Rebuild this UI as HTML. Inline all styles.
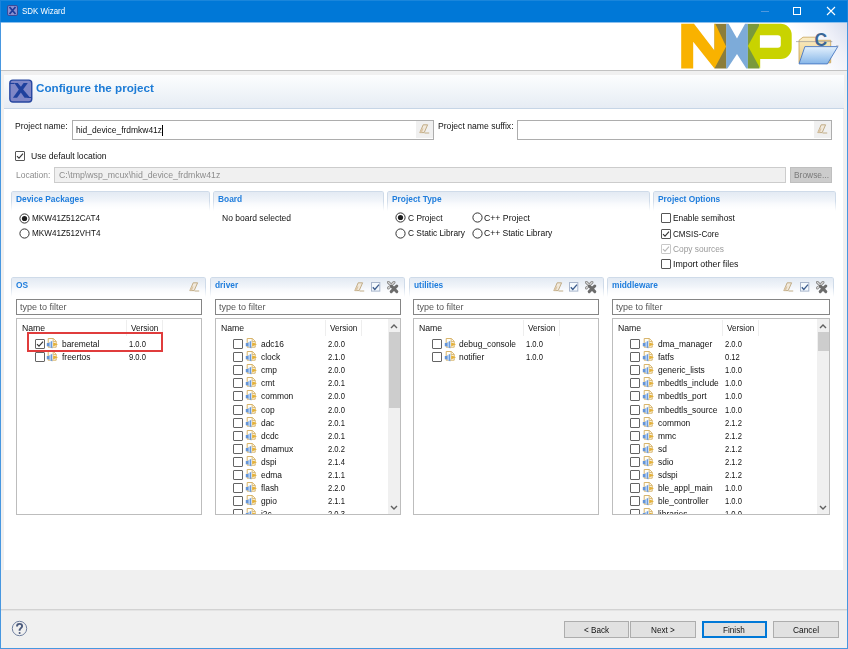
<!DOCTYPE html>
<html><head><meta charset="utf-8"><style>
html,body{margin:0;padding:0;width:848px;height:649px;overflow:hidden;background:#f0f0f0;}
body{position:relative;font-family:"Liberation Sans", sans-serif;}
.t{position:absolute;white-space:nowrap;font-family:"Liberation Sans", sans-serif;}
</style></head><body>
<div style="position:absolute;left:0px;top:0px;width:848px;height:649px;background:#f0f0f0;"></div>
<div style="position:absolute;left:0px;top:0px;width:848px;height:22px;background:#0078d7;"></div>
<div style="position:absolute;left:0px;top:0px;width:848px;height:1px;background:#1a86db;"></div>
<div style="position:absolute;left:0px;top:22px;width:1px;height:627px;background:#4797e0;"></div>
<div style="position:absolute;left:847px;top:22px;width:1px;height:627px;background:#4797e0;"></div>
<div style="position:absolute;left:0px;top:0px;width:1px;height:22px;background:#1a84db;"></div>
<div style="position:absolute;left:847px;top:0px;width:1px;height:22px;background:#1a84db;"></div>
<div style="position:absolute;left:0px;top:648px;width:848px;height:1px;background:#4797e0;"></div>
<div style="position:absolute;left:1px;top:22px;width:846px;height:1px;background:#8cc0ee;"></div>
<svg style="position:absolute;left:7px;top:5px" width="11" height="11" viewBox="0 0 11 11"><rect x="0.5" y="0.5" width="10" height="10" rx="1.5" fill="#8a8fcf" stroke="#3a4a9a" stroke-width="1"/><path d="M2.5 2 L8.5 9 M8.5 2 L2.5 9" stroke="#1d3b9a" stroke-width="1.8"/></svg>
<div class="t" style="left:21.80px;top:6.78px;font-size:9px;line-height:9px;color:#ffffff;font-weight:400;transform:scaleX(0.8787);transform-origin:0 0;">SDK Wizard</div>
<div style="position:absolute;left:761px;top:11px;width:8px;height:1px;background:#4f98de;"></div>
<div style="position:absolute;left:793px;top:7px;width:8px;height:8px;border:1px solid #ffffff;box-sizing:border-box;"></div>
<svg style="position:absolute;left:826px;top:6px" width="10" height="10" viewBox="0 0 10 10"><path d="M1 1 L9 9 M9 1 L1 9" stroke="#ffffff" stroke-width="1.1"/></svg>
<div style="position:absolute;left:1px;top:23px;width:846px;height:47px;background:#ffffff;"></div>
<div style="position:absolute;left:780px;top:23px;width:67px;height:47px;background:linear-gradient(235deg,#d9deee 0%,#eef0f8 25%,#ffffff 60%);"></div>
<div style="position:absolute;left:1px;top:70px;width:846px;height:1px;background:#c2c2c2;"></div>
<svg style="position:absolute;left:676px;top:20px" width="172" height="50" viewBox="676 20 172 50">
<rect x="714.5" y="23.85" width="12" height="44.65" fill="#8c7d3a"/>
<polygon points="681.2,23.85 694,23.85 714.5,50.5 714.5,23.85 715.3,23.85 726.1,46.5 714.5,68.5 693.2,41.65 693.2,68.5 681.2,68.5" fill="#f9b200"/>
<polygon points="726.2,23.85 728.6,23.85 737,38.4 745.1,23.85 747.9,23.85 747.9,68.5 746.3,68.5 737,54.1 727.4,68.5 726.2,68.5" fill="#7dabd9"/>
<rect x="747.9" y="23.85" width="11.6" height="44.65" fill="#7a993c"/>
<polygon points="760.2,23.85 747.9,46.1 760.2,68.5" fill="#c9d300"/>
<path d="M759.5 23.85 L780.5 23.85 A11.2 11.2 0 0 1 791.7 35 L791.7 48 A11 11 0 0 1 780.7 58.9 L759.5 58.9 Z" fill="#c9d300"/>
<path d="M759.9 35.2 L777.8 35.2 A3 3 0 0 1 780.8 38.2 L780.8 44.7 A3 3 0 0 1 777.8 47.7 L759.9 47.7 Z" fill="#ffffff"/>
</svg>
<svg style="position:absolute;left:796px;top:32px" width="50" height="36" viewBox="0 0 50 36">
<defs><linearGradient id="fb" x1="0" y1="0" x2="0" y2="1"><stop offset="0" stop-color="#fbeec8"/><stop offset="1" stop-color="#e9c879"/></linearGradient>
<linearGradient id="ff" x1="0" y1="0" x2="0" y2="1"><stop offset="0" stop-color="#e4f1fd"/><stop offset="1" stop-color="#86b6e8"/></linearGradient></defs>
<path d="M3 8.3 L7 5.2 L19.5 5.2 L21 8.3 L34.7 8.3 L34.7 30.8 L3 30.8 Z" fill="url(#fb)" stroke="#c7a257" stroke-width="0.8"/>
<path d="M0 9.6 L36.3 9.6" stroke="#9a9a9a" stroke-width="0.7"/>
<text x="18.6" y="14.4" font-family="Liberation Sans" font-weight="700" font-size="17.5" fill="#3a6796">C</text>
<path d="M8.9 14.6 L41.8 14.6 L31.4 31.9 L3 31.9 Z" fill="url(#ff)" stroke="#4877c2" stroke-width="0.9"/>
<path d="M40 13.8 L42.5 13.8" stroke="#9a9a9a" stroke-width="0.6"/>
</svg>
<div style="position:absolute;left:4px;top:75px;width:840px;height:33px;background:linear-gradient(180deg,#fcfdfe 0%,#f1f5f9 50%,#e6ecf4 100%);"></div>
<div style="position:absolute;left:4px;top:108px;width:840px;height:1px;background:#c6d5e6;"></div>
<svg style="position:absolute;left:9px;top:79px" width="24" height="24" viewBox="0 0 24 24"><rect x="0.85" y="1.15" width="21.9" height="21.9" rx="3" fill="#7f86c6" stroke="#2646a0" stroke-width="1.4"/><polygon points="5.3,3.9 8.8,3.9 21.1,18.8 15.5,18.8" fill="#1f409d"/><polygon points="14.6,3.9 18.8,3.9 8.1,18.8 3.9,18.8" fill="#1f409d"/><rect x="0.9" y="3.9" width="4.6" height="1.1" fill="#1f409d"/><rect x="18.5" y="18" width="4" height="1" fill="#1f409d"/></svg>
<div class="t" style="left:35.80px;top:82.38px;font-size:11.6px;line-height:11.6px;color:#1c7bd6;font-weight:700;transform:scaleX(1.0062);transform-origin:0 0;">Configure the project</div>
<div style="position:absolute;left:4px;top:109px;width:839px;height:461px;background:#ffffff;"></div>
<div class="t" style="left:15.40px;top:121.06px;font-size:9.5px;line-height:9.5px;color:#111111;font-weight:400;transform:scaleX(0.8974);transform-origin:0 0;">Project name:</div>
<div style="position:absolute;left:72px;top:120px;width:362px;height:20px;box-sizing:border-box;border:1px solid #adadad;background:#ffffff;"></div>
<div class="t" style="left:75.60px;top:125.06px;font-size:9.5px;line-height:9.5px;color:#111111;font-weight:400;transform:scaleX(0.8901);transform-origin:0 0;">hid_device_frdmkw41z</div>
<div style="position:absolute;left:162px;top:125px;width:1px;height:11px;background:#000;"></div>
<div style="position:absolute;left:416px;top:121px;width:17px;height:17px;background:#f0f0f0;"></div>
<svg style="position:absolute;left:419px;top:124px" width="11" height="10" viewBox="0 0 11 10"><path d="M4.2 0.8 L8.6 0.8 L5.2 8.6 L0.8 8.6 Z" fill="#f1e9dc" stroke="#bba57c" stroke-width="0.9"/><path d="M0.8 8.6 L2.6 4.6 L4.6 4.6 L2.9 8.6 Z" fill="#dcc6a6"/><path d="M5.6 9 L10.2 9" stroke="#bba57c" stroke-width="0.9"/></svg>
<div class="t" style="left:437.50px;top:121.06px;font-size:9.5px;line-height:9.5px;color:#111111;font-weight:400;transform:scaleX(0.9072);transform-origin:0 0;">Project name suffix:</div>
<div style="position:absolute;left:517px;top:120px;width:315px;height:20px;box-sizing:border-box;border:1px solid #adadad;background:#ffffff;"></div>
<div style="position:absolute;left:814px;top:121px;width:17px;height:17px;background:#f0f0f0;"></div>
<svg style="position:absolute;left:817px;top:124px" width="11" height="10" viewBox="0 0 11 10"><path d="M4.2 0.8 L8.6 0.8 L5.2 8.6 L0.8 8.6 Z" fill="#f1e9dc" stroke="#bba57c" stroke-width="0.9"/><path d="M0.8 8.6 L2.6 4.6 L4.6 4.6 L2.9 8.6 Z" fill="#dcc6a6"/><path d="M5.6 9 L10.2 9" stroke="#bba57c" stroke-width="0.9"/></svg>
<div style="position:absolute;left:15px;top:151px;width:10px;height:10px;box-sizing:border-box;border:1px solid #555555;background:#fff;border-radius:1px"></div>
<svg style="position:absolute;left:15px;top:151px" width="10" height="10" viewBox="0 0 10 10"><path d="M2 5.2 L4 7.2 L8 2.6" fill="none" stroke="#333333" stroke-width="1.1"/></svg>
<div class="t" style="left:30.90px;top:151.16px;font-size:9.5px;line-height:9.5px;color:#111111;font-weight:400;transform:scaleX(0.9064);transform-origin:0 0;">Use default location</div>
<div class="t" style="left:15.90px;top:170.26px;font-size:9.5px;line-height:9.5px;color:#8d8d8d;font-weight:400;transform:scaleX(0.8919);transform-origin:0 0;">Location:</div>
<div style="position:absolute;left:54px;top:167px;width:732px;height:16px;box-sizing:border-box;border:1px solid #cccccc;background:#f0f0f0;"></div>
<div class="t" style="left:58.80px;top:170.26px;font-size:9.5px;line-height:9.5px;color:#8d8d8d;font-weight:400;transform:scaleX(0.9228);transform-origin:0 0;">C:\tmp\wsp_mcux\hid_device_frdmkw41z</div>
<div style="position:absolute;left:790px;top:167px;width:42px;height:16px;background:#cccccc;box-sizing:border-box;border:1px solid #bfbfbf;"></div>
<div class="t" style="left:793.50px;top:169.76px;font-size:9.5px;line-height:9.5px;color:#7a7a7a;font-weight:400;transform:scaleX(0.8850);transform-origin:0 0;">Browse...</div>
<div style="position:absolute;left:11px;top:191px;width:199px;height:20px;box-sizing:border-box;border:1px solid #cfdbe9;border-bottom:none;border-radius:2px 2px 0 0;background:linear-gradient(180deg,#e3eaf3 0%,#f4f7fb 55%,#ffffff 100%);-webkit-mask-image:linear-gradient(180deg,#000 0%,#000 50%,rgba(0,0,0,0) 100%);"></div>
<div class="t" style="left:16.00px;top:193.76px;font-size:9.5px;line-height:9.5px;color:#1f7ddc;font-weight:700;transform:scaleX(0.8800);transform-origin:0 0;">Device Packages</div>
<div style="position:absolute;left:213px;top:191px;width:171px;height:20px;box-sizing:border-box;border:1px solid #cfdbe9;border-bottom:none;border-radius:2px 2px 0 0;background:linear-gradient(180deg,#e3eaf3 0%,#f4f7fb 55%,#ffffff 100%);-webkit-mask-image:linear-gradient(180deg,#000 0%,#000 50%,rgba(0,0,0,0) 100%);"></div>
<div class="t" style="left:218.00px;top:193.76px;font-size:9.5px;line-height:9.5px;color:#1f7ddc;font-weight:700;transform:scaleX(0.8800);transform-origin:0 0;">Board</div>
<div style="position:absolute;left:387px;top:191px;width:263px;height:20px;box-sizing:border-box;border:1px solid #cfdbe9;border-bottom:none;border-radius:2px 2px 0 0;background:linear-gradient(180deg,#e3eaf3 0%,#f4f7fb 55%,#ffffff 100%);-webkit-mask-image:linear-gradient(180deg,#000 0%,#000 50%,rgba(0,0,0,0) 100%);"></div>
<div class="t" style="left:392.00px;top:193.76px;font-size:9.5px;line-height:9.5px;color:#1f7ddc;font-weight:700;transform:scaleX(0.8800);transform-origin:0 0;">Project Type</div>
<div style="position:absolute;left:653px;top:191px;width:183px;height:20px;box-sizing:border-box;border:1px solid #cfdbe9;border-bottom:none;border-radius:2px 2px 0 0;background:linear-gradient(180deg,#e3eaf3 0%,#f4f7fb 55%,#ffffff 100%);-webkit-mask-image:linear-gradient(180deg,#000 0%,#000 50%,rgba(0,0,0,0) 100%);"></div>
<div class="t" style="left:658.00px;top:193.76px;font-size:9.5px;line-height:9.5px;color:#1f7ddc;font-weight:700;transform:scaleX(0.8800);transform-origin:0 0;">Project Options</div>
<svg style="position:absolute;left:18.5px;top:212.5px" width="11" height="11" viewBox="0 0 11 11"><circle cx="5.5" cy="5.5" r="4.6" fill="#fff" stroke="#333" stroke-width="1"/><circle cx="5.5" cy="5.5" r="2.6" fill="#1e1e1e"/></svg>
<div class="t" style="left:31.50px;top:212.76px;font-size:9.5px;line-height:9.5px;color:#111111;font-weight:400;transform:scaleX(0.8603);transform-origin:0 0;">MKW41Z512CAT4</div>
<svg style="position:absolute;left:18.5px;top:227.5px" width="11" height="11" viewBox="0 0 11 11"><circle cx="5.5" cy="5.5" r="4.6" fill="#fff" stroke="#333" stroke-width="1"/></svg>
<div class="t" style="left:31.50px;top:228.06px;font-size:9.5px;line-height:9.5px;color:#111111;font-weight:400;transform:scaleX(0.8582);transform-origin:0 0;">MKW41Z512VHT4</div>
<div class="t" style="left:221.50px;top:212.76px;font-size:9.5px;line-height:9.5px;color:#111111;font-weight:400;transform:scaleX(0.8958);transform-origin:0 0;">No board selected</div>
<svg style="position:absolute;left:394.5px;top:212.3px" width="11" height="11" viewBox="0 0 11 11"><circle cx="5.5" cy="5.5" r="4.6" fill="#fff" stroke="#333" stroke-width="1"/><circle cx="5.5" cy="5.5" r="2.6" fill="#1e1e1e"/></svg>
<div class="t" style="left:407.60px;top:212.96px;font-size:9.5px;line-height:9.5px;color:#111111;font-weight:400;transform:scaleX(0.8836);transform-origin:0 0;">C Project</div>
<svg style="position:absolute;left:471.5px;top:212.3px" width="11" height="11" viewBox="0 0 11 11"><circle cx="5.5" cy="5.5" r="4.6" fill="#fff" stroke="#333" stroke-width="1"/></svg>
<div class="t" style="left:483.80px;top:212.96px;font-size:9.5px;line-height:9.5px;color:#111111;font-weight:400;transform:scaleX(0.9151);transform-origin:0 0;">C++ Project</div>
<svg style="position:absolute;left:394.5px;top:227.9px" width="11" height="11" viewBox="0 0 11 11"><circle cx="5.5" cy="5.5" r="4.6" fill="#fff" stroke="#333" stroke-width="1"/></svg>
<div class="t" style="left:407.60px;top:228.46px;font-size:9.5px;line-height:9.5px;color:#111111;font-weight:400;transform:scaleX(0.8772);transform-origin:0 0;">C Static Library</div>
<svg style="position:absolute;left:471.5px;top:227.9px" width="11" height="11" viewBox="0 0 11 11"><circle cx="5.5" cy="5.5" r="4.6" fill="#fff" stroke="#333" stroke-width="1"/></svg>
<div class="t" style="left:483.80px;top:228.46px;font-size:9.5px;line-height:9.5px;color:#111111;font-weight:400;transform:scaleX(0.8974);transform-origin:0 0;">C++ Static Library</div>
<div style="position:absolute;left:661px;top:213px;width:10px;height:10px;box-sizing:border-box;border:1px solid #555555;background:#fff;border-radius:1px"></div>
<div class="t" style="left:673.00px;top:213.26px;font-size:9.5px;line-height:9.5px;color:#111111;font-weight:400;transform:scaleX(0.8796);transform-origin:0 0;">Enable semihost</div>
<div style="position:absolute;left:661px;top:229px;width:10px;height:10px;box-sizing:border-box;border:1px solid #555555;background:#fff;border-radius:1px"></div>
<svg style="position:absolute;left:661px;top:229px" width="10" height="10" viewBox="0 0 10 10"><path d="M2 5.2 L4 7.2 L8 2.6" fill="none" stroke="#333333" stroke-width="1.1"/></svg>
<div class="t" style="left:673.00px;top:228.56px;font-size:9.5px;line-height:9.5px;color:#111111;font-weight:400;transform:scaleX(0.8540);transform-origin:0 0;">CMSIS-Core</div>
<div style="position:absolute;left:661px;top:244px;width:10px;height:10px;box-sizing:border-box;border:1px solid #c8c8c8;background:#fff;border-radius:1px"></div>
<svg style="position:absolute;left:661px;top:244px" width="10" height="10" viewBox="0 0 10 10"><path d="M2 5.2 L4 7.2 L8 2.6" fill="none" stroke="#b8b8b8" stroke-width="1.1"/></svg>
<div class="t" style="left:673.00px;top:243.86px;font-size:9.5px;line-height:9.5px;color:#9a9a9a;font-weight:400;transform:scaleX(0.8786);transform-origin:0 0;">Copy sources</div>
<div style="position:absolute;left:661px;top:259px;width:10px;height:10px;box-sizing:border-box;border:1px solid #555555;background:#fff;border-radius:1px"></div>
<div class="t" style="left:673.00px;top:259.16px;font-size:9.5px;line-height:9.5px;color:#111111;font-weight:400;transform:scaleX(0.9255);transform-origin:0 0;">Import other files</div>
<div style="position:absolute;left:11px;top:277px;width:195px;height:20px;box-sizing:border-box;border:1px solid #cfdbe9;border-bottom:none;border-radius:2px 2px 0 0;background:linear-gradient(180deg,#e3eaf3 0%,#f4f7fb 55%,#ffffff 100%);-webkit-mask-image:linear-gradient(180deg,#000 0%,#000 50%,rgba(0,0,0,0) 100%);"></div>
<div class="t" style="left:16.00px;top:279.86px;font-size:9.5px;line-height:9.5px;color:#1f7ddc;font-weight:700;transform:scaleX(0.8800);transform-origin:0 0;">OS</div>
<svg style="position:absolute;left:189px;top:282px" width="11" height="10" viewBox="0 0 11 10"><path d="M4.2 0.8 L8.6 0.8 L5.2 8.6 L0.8 8.6 Z" fill="#f1e9dc" stroke="#bba57c" stroke-width="0.9"/><path d="M0.8 8.6 L2.6 4.6 L4.6 4.6 L2.9 8.6 Z" fill="#dcc6a6"/><path d="M5.6 9 L10.2 9" stroke="#bba57c" stroke-width="0.9"/></svg>
<div style="position:absolute;left:16px;top:299px;width:186px;height:16px;box-sizing:border-box;border:1px solid #858585;background:#fff;"></div>
<div class="t" style="left:20.00px;top:301.96px;font-size:9.5px;line-height:9.5px;color:#555555;font-weight:400;transform:scaleX(0.9488);transform-origin:0 0;">type to filter</div>
<div style="position:absolute;left:16px;top:318px;width:186px;height:197px;box-sizing:border-box;border:1px solid #bdbdbd;background:#fff;overflow:hidden;"></div>
<div style="position:absolute;left:126px;top:320px;width:1px;height:16px;background:#eeeeee;"></div>
<div style="position:absolute;left:162px;top:320px;width:1px;height:16px;background:#eeeeee;"></div>
<div class="t" style="left:22.00px;top:323.46px;font-size:9.5px;line-height:9.5px;color:#111111;font-weight:400;transform:scaleX(0.9146);transform-origin:0 0;">Name</div>
<div class="t" style="left:131.00px;top:323.46px;font-size:9.5px;line-height:9.5px;color:#111111;font-weight:400;transform:scaleX(0.8604);transform-origin:0 0;">Version</div>
<div style="position:absolute;left:17px;top:319px;width:184px;height:195px;overflow:hidden">
<div style="position:absolute;left:17.5px;top:20.100000000000023px;width:10px;height:10px;box-sizing:border-box;border:1px solid #646464;background:#fff;border-radius:1px"></div>
<svg style="position:absolute;left:17.5px;top:20.100000000000023px" width="10" height="10" viewBox="0 0 10 10"><path d="M2 5.2 L4 7.2 L8 2.6" fill="none" stroke="#333" stroke-width="1.1"/></svg>
<svg style="position:absolute;left:29.4px;top:19.10px" width="13" height="12" viewBox="0 0 13 12">
<path d="M2.2 0.5 L7.4 0.5 L10.2 3.3 L10.2 9.2 L2.2 9.2 Z" fill="#fffdf5" stroke="#d4ad5c" stroke-width="0.9"/>
<path d="M7.2 0.6 L7.2 3.5 L10.1 3.5" fill="none" stroke="#d4ad5c" stroke-width="0.8"/>
<path d="M0.8 5 L2.8 5 L6.3 2.8 L6.3 10.5 L2.8 8.3 L0.8 8.3 Z" fill="#6494d6"/>
<path d="M3.4 4.3 L5.1 3.5 L5.1 9.7 L3.4 8.9 Z" fill="#b3cff2"/>
<path d="M7.1 4.2 L12 6.3 L7.1 8.4 Z" fill="#e4b13a"/>
</svg>
<div class="t" style="left:45.00px;top:20.16px;font-size:9.5px;line-height:9.5px;color:#111111;transform:scaleX(0.885);transform-origin:0 0">baremetal</div>
<div class="t" style="left:112.00px;top:20.16px;font-size:9.5px;line-height:9.5px;color:#111111;transform:scaleX(0.8);transform-origin:0 0">1.0.0</div>
<div style="position:absolute;left:17.5px;top:33.18000000000001px;width:10px;height:10px;box-sizing:border-box;border:1px solid #646464;background:#fff;border-radius:1px"></div>
<svg style="position:absolute;left:29.4px;top:32.18px" width="13" height="12" viewBox="0 0 13 12">
<path d="M2.2 0.5 L7.4 0.5 L10.2 3.3 L10.2 9.2 L2.2 9.2 Z" fill="#fffdf5" stroke="#d4ad5c" stroke-width="0.9"/>
<path d="M7.2 0.6 L7.2 3.5 L10.1 3.5" fill="none" stroke="#d4ad5c" stroke-width="0.8"/>
<path d="M0.8 5 L2.8 5 L6.3 2.8 L6.3 10.5 L2.8 8.3 L0.8 8.3 Z" fill="#6494d6"/>
<path d="M3.4 4.3 L5.1 3.5 L5.1 9.7 L3.4 8.9 Z" fill="#b3cff2"/>
<path d="M7.1 4.2 L12 6.3 L7.1 8.4 Z" fill="#e4b13a"/>
</svg>
<div class="t" style="left:45.00px;top:33.24px;font-size:9.5px;line-height:9.5px;color:#111111;transform:scaleX(0.885);transform-origin:0 0">freertos</div>
<div class="t" style="left:112.00px;top:33.24px;font-size:9.5px;line-height:9.5px;color:#111111;transform:scaleX(0.8);transform-origin:0 0">9.0.0</div>
</div>
<div style="position:absolute;left:27px;top:332px;width:136px;height:20px;box-sizing:border-box;border:2px solid #e03c3c;"></div>
<div style="position:absolute;left:210px;top:277px;width:195px;height:20px;box-sizing:border-box;border:1px solid #cfdbe9;border-bottom:none;border-radius:2px 2px 0 0;background:linear-gradient(180deg,#e3eaf3 0%,#f4f7fb 55%,#ffffff 100%);-webkit-mask-image:linear-gradient(180deg,#000 0%,#000 50%,rgba(0,0,0,0) 100%);"></div>
<div class="t" style="left:215.00px;top:279.86px;font-size:9.5px;line-height:9.5px;color:#1f7ddc;font-weight:700;transform:scaleX(0.8800);transform-origin:0 0;">driver</div>
<svg style="position:absolute;left:354px;top:282px" width="11" height="10" viewBox="0 0 11 10"><path d="M4.2 0.8 L8.6 0.8 L5.2 8.6 L0.8 8.6 Z" fill="#f1e9dc" stroke="#bba57c" stroke-width="0.9"/><path d="M0.8 8.6 L2.6 4.6 L4.6 4.6 L2.9 8.6 Z" fill="#dcc6a6"/><path d="M5.6 9 L10.2 9" stroke="#bba57c" stroke-width="0.9"/></svg>
<svg style="position:absolute;left:371px;top:282px" width="10" height="10" viewBox="0 0 10 10"><rect x="0.5" y="0.5" width="8.3" height="8.6" fill="#f4f9fd" stroke="#a9b6cc" stroke-width="1"/><path d="M1.8 5.2 L3.8 7.4 L8 2.6" fill="none" stroke="#3b5b8c" stroke-width="1.3"/></svg>
<svg style="position:absolute;left:387px;top:281px" width="13" height="13" viewBox="0 0 13 13"><path d="M1.4 1.4 L7 7 M7 1.4 L1.4 7" stroke="#8c8c8c" stroke-width="2.9" stroke-linecap="round"/><path d="M1.4 1.4 L7 7 M7 1.4 L1.4 7" stroke="#dcdcdc" stroke-width="1.1" stroke-linecap="round"/><path d="M4.2 5 L9.8 10.6 M9.8 5 L4.2 10.6" stroke="#6c6c6c" stroke-width="3" stroke-linecap="round"/></svg>
<div style="position:absolute;left:214.5px;top:299px;width:186.5px;height:16px;box-sizing:border-box;border:1px solid #858585;background:#fff;"></div>
<div class="t" style="left:218.50px;top:301.96px;font-size:9.5px;line-height:9.5px;color:#555555;font-weight:400;transform:scaleX(0.9488);transform-origin:0 0;">type to filter</div>
<div style="position:absolute;left:214.5px;top:318px;width:186.5px;height:197px;box-sizing:border-box;border:1px solid #bdbdbd;background:#fff;overflow:hidden;"></div>
<div style="position:absolute;left:324.5px;top:320px;width:1px;height:16px;background:#eeeeee;"></div>
<div style="position:absolute;left:360.5px;top:320px;width:1px;height:16px;background:#eeeeee;"></div>
<div class="t" style="left:220.50px;top:323.46px;font-size:9.5px;line-height:9.5px;color:#111111;font-weight:400;transform:scaleX(0.9146);transform-origin:0 0;">Name</div>
<div class="t" style="left:329.50px;top:323.46px;font-size:9.5px;line-height:9.5px;color:#111111;font-weight:400;transform:scaleX(0.8604);transform-origin:0 0;">Version</div>
<div style="position:absolute;left:215.5px;top:319px;width:184.5px;height:195px;overflow:hidden">
<div style="position:absolute;left:17.5px;top:20.100000000000023px;width:10px;height:10px;box-sizing:border-box;border:1px solid #646464;background:#fff;border-radius:1px"></div>
<svg style="position:absolute;left:29.4px;top:19.10px" width="13" height="12" viewBox="0 0 13 12">
<path d="M2.2 0.5 L7.4 0.5 L10.2 3.3 L10.2 9.2 L2.2 9.2 Z" fill="#fffdf5" stroke="#d4ad5c" stroke-width="0.9"/>
<path d="M7.2 0.6 L7.2 3.5 L10.1 3.5" fill="none" stroke="#d4ad5c" stroke-width="0.8"/>
<path d="M0.8 5 L2.8 5 L6.3 2.8 L6.3 10.5 L2.8 8.3 L0.8 8.3 Z" fill="#6494d6"/>
<path d="M3.4 4.3 L5.1 3.5 L5.1 9.7 L3.4 8.9 Z" fill="#b3cff2"/>
<path d="M7.1 4.2 L12 6.3 L7.1 8.4 Z" fill="#e4b13a"/>
</svg>
<div class="t" style="left:45.00px;top:20.16px;font-size:9.5px;line-height:9.5px;color:#111111;transform:scaleX(0.885);transform-origin:0 0">adc16</div>
<div class="t" style="left:112.00px;top:20.16px;font-size:9.5px;line-height:9.5px;color:#111111;transform:scaleX(0.8);transform-origin:0 0">2.0.0</div>
<div style="position:absolute;left:17.5px;top:33.18000000000001px;width:10px;height:10px;box-sizing:border-box;border:1px solid #646464;background:#fff;border-radius:1px"></div>
<svg style="position:absolute;left:29.4px;top:32.18px" width="13" height="12" viewBox="0 0 13 12">
<path d="M2.2 0.5 L7.4 0.5 L10.2 3.3 L10.2 9.2 L2.2 9.2 Z" fill="#fffdf5" stroke="#d4ad5c" stroke-width="0.9"/>
<path d="M7.2 0.6 L7.2 3.5 L10.1 3.5" fill="none" stroke="#d4ad5c" stroke-width="0.8"/>
<path d="M0.8 5 L2.8 5 L6.3 2.8 L6.3 10.5 L2.8 8.3 L0.8 8.3 Z" fill="#6494d6"/>
<path d="M3.4 4.3 L5.1 3.5 L5.1 9.7 L3.4 8.9 Z" fill="#b3cff2"/>
<path d="M7.1 4.2 L12 6.3 L7.1 8.4 Z" fill="#e4b13a"/>
</svg>
<div class="t" style="left:45.00px;top:33.24px;font-size:9.5px;line-height:9.5px;color:#111111;transform:scaleX(0.885);transform-origin:0 0">clock</div>
<div class="t" style="left:112.00px;top:33.24px;font-size:9.5px;line-height:9.5px;color:#111111;transform:scaleX(0.8);transform-origin:0 0">2.1.0</div>
<div style="position:absolute;left:17.5px;top:46.26000000000005px;width:10px;height:10px;box-sizing:border-box;border:1px solid #646464;background:#fff;border-radius:1px"></div>
<svg style="position:absolute;left:29.4px;top:45.26px" width="13" height="12" viewBox="0 0 13 12">
<path d="M2.2 0.5 L7.4 0.5 L10.2 3.3 L10.2 9.2 L2.2 9.2 Z" fill="#fffdf5" stroke="#d4ad5c" stroke-width="0.9"/>
<path d="M7.2 0.6 L7.2 3.5 L10.1 3.5" fill="none" stroke="#d4ad5c" stroke-width="0.8"/>
<path d="M0.8 5 L2.8 5 L6.3 2.8 L6.3 10.5 L2.8 8.3 L0.8 8.3 Z" fill="#6494d6"/>
<path d="M3.4 4.3 L5.1 3.5 L5.1 9.7 L3.4 8.9 Z" fill="#b3cff2"/>
<path d="M7.1 4.2 L12 6.3 L7.1 8.4 Z" fill="#e4b13a"/>
</svg>
<div class="t" style="left:45.00px;top:46.32px;font-size:9.5px;line-height:9.5px;color:#111111;transform:scaleX(0.885);transform-origin:0 0">cmp</div>
<div class="t" style="left:112.00px;top:46.32px;font-size:9.5px;line-height:9.5px;color:#111111;transform:scaleX(0.8);transform-origin:0 0">2.0.0</div>
<div style="position:absolute;left:17.5px;top:59.34000000000003px;width:10px;height:10px;box-sizing:border-box;border:1px solid #646464;background:#fff;border-radius:1px"></div>
<svg style="position:absolute;left:29.4px;top:58.34px" width="13" height="12" viewBox="0 0 13 12">
<path d="M2.2 0.5 L7.4 0.5 L10.2 3.3 L10.2 9.2 L2.2 9.2 Z" fill="#fffdf5" stroke="#d4ad5c" stroke-width="0.9"/>
<path d="M7.2 0.6 L7.2 3.5 L10.1 3.5" fill="none" stroke="#d4ad5c" stroke-width="0.8"/>
<path d="M0.8 5 L2.8 5 L6.3 2.8 L6.3 10.5 L2.8 8.3 L0.8 8.3 Z" fill="#6494d6"/>
<path d="M3.4 4.3 L5.1 3.5 L5.1 9.7 L3.4 8.9 Z" fill="#b3cff2"/>
<path d="M7.1 4.2 L12 6.3 L7.1 8.4 Z" fill="#e4b13a"/>
</svg>
<div class="t" style="left:45.00px;top:59.40px;font-size:9.5px;line-height:9.5px;color:#111111;transform:scaleX(0.885);transform-origin:0 0">cmt</div>
<div class="t" style="left:112.00px;top:59.40px;font-size:9.5px;line-height:9.5px;color:#111111;transform:scaleX(0.8);transform-origin:0 0">2.0.1</div>
<div style="position:absolute;left:17.5px;top:72.42000000000002px;width:10px;height:10px;box-sizing:border-box;border:1px solid #646464;background:#fff;border-radius:1px"></div>
<svg style="position:absolute;left:29.4px;top:71.42px" width="13" height="12" viewBox="0 0 13 12">
<path d="M2.2 0.5 L7.4 0.5 L10.2 3.3 L10.2 9.2 L2.2 9.2 Z" fill="#fffdf5" stroke="#d4ad5c" stroke-width="0.9"/>
<path d="M7.2 0.6 L7.2 3.5 L10.1 3.5" fill="none" stroke="#d4ad5c" stroke-width="0.8"/>
<path d="M0.8 5 L2.8 5 L6.3 2.8 L6.3 10.5 L2.8 8.3 L0.8 8.3 Z" fill="#6494d6"/>
<path d="M3.4 4.3 L5.1 3.5 L5.1 9.7 L3.4 8.9 Z" fill="#b3cff2"/>
<path d="M7.1 4.2 L12 6.3 L7.1 8.4 Z" fill="#e4b13a"/>
</svg>
<div class="t" style="left:45.00px;top:72.48px;font-size:9.5px;line-height:9.5px;color:#111111;transform:scaleX(0.885);transform-origin:0 0">common</div>
<div class="t" style="left:112.00px;top:72.48px;font-size:9.5px;line-height:9.5px;color:#111111;transform:scaleX(0.8);transform-origin:0 0">2.0.0</div>
<div style="position:absolute;left:17.5px;top:85.5px;width:10px;height:10px;box-sizing:border-box;border:1px solid #646464;background:#fff;border-radius:1px"></div>
<svg style="position:absolute;left:29.4px;top:84.50px" width="13" height="12" viewBox="0 0 13 12">
<path d="M2.2 0.5 L7.4 0.5 L10.2 3.3 L10.2 9.2 L2.2 9.2 Z" fill="#fffdf5" stroke="#d4ad5c" stroke-width="0.9"/>
<path d="M7.2 0.6 L7.2 3.5 L10.1 3.5" fill="none" stroke="#d4ad5c" stroke-width="0.8"/>
<path d="M0.8 5 L2.8 5 L6.3 2.8 L6.3 10.5 L2.8 8.3 L0.8 8.3 Z" fill="#6494d6"/>
<path d="M3.4 4.3 L5.1 3.5 L5.1 9.7 L3.4 8.9 Z" fill="#b3cff2"/>
<path d="M7.1 4.2 L12 6.3 L7.1 8.4 Z" fill="#e4b13a"/>
</svg>
<div class="t" style="left:45.00px;top:85.56px;font-size:9.5px;line-height:9.5px;color:#111111;transform:scaleX(0.885);transform-origin:0 0">cop</div>
<div class="t" style="left:112.00px;top:85.56px;font-size:9.5px;line-height:9.5px;color:#111111;transform:scaleX(0.8);transform-origin:0 0">2.0.0</div>
<div style="position:absolute;left:17.5px;top:98.58000000000004px;width:10px;height:10px;box-sizing:border-box;border:1px solid #646464;background:#fff;border-radius:1px"></div>
<svg style="position:absolute;left:29.4px;top:97.58px" width="13" height="12" viewBox="0 0 13 12">
<path d="M2.2 0.5 L7.4 0.5 L10.2 3.3 L10.2 9.2 L2.2 9.2 Z" fill="#fffdf5" stroke="#d4ad5c" stroke-width="0.9"/>
<path d="M7.2 0.6 L7.2 3.5 L10.1 3.5" fill="none" stroke="#d4ad5c" stroke-width="0.8"/>
<path d="M0.8 5 L2.8 5 L6.3 2.8 L6.3 10.5 L2.8 8.3 L0.8 8.3 Z" fill="#6494d6"/>
<path d="M3.4 4.3 L5.1 3.5 L5.1 9.7 L3.4 8.9 Z" fill="#b3cff2"/>
<path d="M7.1 4.2 L12 6.3 L7.1 8.4 Z" fill="#e4b13a"/>
</svg>
<div class="t" style="left:45.00px;top:98.64px;font-size:9.5px;line-height:9.5px;color:#111111;transform:scaleX(0.885);transform-origin:0 0">dac</div>
<div class="t" style="left:112.00px;top:98.64px;font-size:9.5px;line-height:9.5px;color:#111111;transform:scaleX(0.8);transform-origin:0 0">2.0.1</div>
<div style="position:absolute;left:17.5px;top:111.66000000000003px;width:10px;height:10px;box-sizing:border-box;border:1px solid #646464;background:#fff;border-radius:1px"></div>
<svg style="position:absolute;left:29.4px;top:110.66px" width="13" height="12" viewBox="0 0 13 12">
<path d="M2.2 0.5 L7.4 0.5 L10.2 3.3 L10.2 9.2 L2.2 9.2 Z" fill="#fffdf5" stroke="#d4ad5c" stroke-width="0.9"/>
<path d="M7.2 0.6 L7.2 3.5 L10.1 3.5" fill="none" stroke="#d4ad5c" stroke-width="0.8"/>
<path d="M0.8 5 L2.8 5 L6.3 2.8 L6.3 10.5 L2.8 8.3 L0.8 8.3 Z" fill="#6494d6"/>
<path d="M3.4 4.3 L5.1 3.5 L5.1 9.7 L3.4 8.9 Z" fill="#b3cff2"/>
<path d="M7.1 4.2 L12 6.3 L7.1 8.4 Z" fill="#e4b13a"/>
</svg>
<div class="t" style="left:45.00px;top:111.72px;font-size:9.5px;line-height:9.5px;color:#111111;transform:scaleX(0.885);transform-origin:0 0">dcdc</div>
<div class="t" style="left:112.00px;top:111.72px;font-size:9.5px;line-height:9.5px;color:#111111;transform:scaleX(0.8);transform-origin:0 0">2.0.1</div>
<div style="position:absolute;left:17.5px;top:124.74000000000001px;width:10px;height:10px;box-sizing:border-box;border:1px solid #646464;background:#fff;border-radius:1px"></div>
<svg style="position:absolute;left:29.4px;top:123.74px" width="13" height="12" viewBox="0 0 13 12">
<path d="M2.2 0.5 L7.4 0.5 L10.2 3.3 L10.2 9.2 L2.2 9.2 Z" fill="#fffdf5" stroke="#d4ad5c" stroke-width="0.9"/>
<path d="M7.2 0.6 L7.2 3.5 L10.1 3.5" fill="none" stroke="#d4ad5c" stroke-width="0.8"/>
<path d="M0.8 5 L2.8 5 L6.3 2.8 L6.3 10.5 L2.8 8.3 L0.8 8.3 Z" fill="#6494d6"/>
<path d="M3.4 4.3 L5.1 3.5 L5.1 9.7 L3.4 8.9 Z" fill="#b3cff2"/>
<path d="M7.1 4.2 L12 6.3 L7.1 8.4 Z" fill="#e4b13a"/>
</svg>
<div class="t" style="left:45.00px;top:124.80px;font-size:9.5px;line-height:9.5px;color:#111111;transform:scaleX(0.885);transform-origin:0 0">dmamux</div>
<div class="t" style="left:112.00px;top:124.80px;font-size:9.5px;line-height:9.5px;color:#111111;transform:scaleX(0.8);transform-origin:0 0">2.0.2</div>
<div style="position:absolute;left:17.5px;top:137.82000000000005px;width:10px;height:10px;box-sizing:border-box;border:1px solid #646464;background:#fff;border-radius:1px"></div>
<svg style="position:absolute;left:29.4px;top:136.82px" width="13" height="12" viewBox="0 0 13 12">
<path d="M2.2 0.5 L7.4 0.5 L10.2 3.3 L10.2 9.2 L2.2 9.2 Z" fill="#fffdf5" stroke="#d4ad5c" stroke-width="0.9"/>
<path d="M7.2 0.6 L7.2 3.5 L10.1 3.5" fill="none" stroke="#d4ad5c" stroke-width="0.8"/>
<path d="M0.8 5 L2.8 5 L6.3 2.8 L6.3 10.5 L2.8 8.3 L0.8 8.3 Z" fill="#6494d6"/>
<path d="M3.4 4.3 L5.1 3.5 L5.1 9.7 L3.4 8.9 Z" fill="#b3cff2"/>
<path d="M7.1 4.2 L12 6.3 L7.1 8.4 Z" fill="#e4b13a"/>
</svg>
<div class="t" style="left:45.00px;top:137.88px;font-size:9.5px;line-height:9.5px;color:#111111;transform:scaleX(0.885);transform-origin:0 0">dspi</div>
<div class="t" style="left:112.00px;top:137.88px;font-size:9.5px;line-height:9.5px;color:#111111;transform:scaleX(0.8);transform-origin:0 0">2.1.4</div>
<div style="position:absolute;left:17.5px;top:150.90000000000003px;width:10px;height:10px;box-sizing:border-box;border:1px solid #646464;background:#fff;border-radius:1px"></div>
<svg style="position:absolute;left:29.4px;top:149.90px" width="13" height="12" viewBox="0 0 13 12">
<path d="M2.2 0.5 L7.4 0.5 L10.2 3.3 L10.2 9.2 L2.2 9.2 Z" fill="#fffdf5" stroke="#d4ad5c" stroke-width="0.9"/>
<path d="M7.2 0.6 L7.2 3.5 L10.1 3.5" fill="none" stroke="#d4ad5c" stroke-width="0.8"/>
<path d="M0.8 5 L2.8 5 L6.3 2.8 L6.3 10.5 L2.8 8.3 L0.8 8.3 Z" fill="#6494d6"/>
<path d="M3.4 4.3 L5.1 3.5 L5.1 9.7 L3.4 8.9 Z" fill="#b3cff2"/>
<path d="M7.1 4.2 L12 6.3 L7.1 8.4 Z" fill="#e4b13a"/>
</svg>
<div class="t" style="left:45.00px;top:150.96px;font-size:9.5px;line-height:9.5px;color:#111111;transform:scaleX(0.885);transform-origin:0 0">edma</div>
<div class="t" style="left:112.00px;top:150.96px;font-size:9.5px;line-height:9.5px;color:#111111;transform:scaleX(0.8);transform-origin:0 0">2.1.1</div>
<div style="position:absolute;left:17.5px;top:163.98000000000002px;width:10px;height:10px;box-sizing:border-box;border:1px solid #646464;background:#fff;border-radius:1px"></div>
<svg style="position:absolute;left:29.4px;top:162.98px" width="13" height="12" viewBox="0 0 13 12">
<path d="M2.2 0.5 L7.4 0.5 L10.2 3.3 L10.2 9.2 L2.2 9.2 Z" fill="#fffdf5" stroke="#d4ad5c" stroke-width="0.9"/>
<path d="M7.2 0.6 L7.2 3.5 L10.1 3.5" fill="none" stroke="#d4ad5c" stroke-width="0.8"/>
<path d="M0.8 5 L2.8 5 L6.3 2.8 L6.3 10.5 L2.8 8.3 L0.8 8.3 Z" fill="#6494d6"/>
<path d="M3.4 4.3 L5.1 3.5 L5.1 9.7 L3.4 8.9 Z" fill="#b3cff2"/>
<path d="M7.1 4.2 L12 6.3 L7.1 8.4 Z" fill="#e4b13a"/>
</svg>
<div class="t" style="left:45.00px;top:164.04px;font-size:9.5px;line-height:9.5px;color:#111111;transform:scaleX(0.885);transform-origin:0 0">flash</div>
<div class="t" style="left:112.00px;top:164.04px;font-size:9.5px;line-height:9.5px;color:#111111;transform:scaleX(0.8);transform-origin:0 0">2.2.0</div>
<div style="position:absolute;left:17.5px;top:177.06000000000006px;width:10px;height:10px;box-sizing:border-box;border:1px solid #646464;background:#fff;border-radius:1px"></div>
<svg style="position:absolute;left:29.4px;top:176.06px" width="13" height="12" viewBox="0 0 13 12">
<path d="M2.2 0.5 L7.4 0.5 L10.2 3.3 L10.2 9.2 L2.2 9.2 Z" fill="#fffdf5" stroke="#d4ad5c" stroke-width="0.9"/>
<path d="M7.2 0.6 L7.2 3.5 L10.1 3.5" fill="none" stroke="#d4ad5c" stroke-width="0.8"/>
<path d="M0.8 5 L2.8 5 L6.3 2.8 L6.3 10.5 L2.8 8.3 L0.8 8.3 Z" fill="#6494d6"/>
<path d="M3.4 4.3 L5.1 3.5 L5.1 9.7 L3.4 8.9 Z" fill="#b3cff2"/>
<path d="M7.1 4.2 L12 6.3 L7.1 8.4 Z" fill="#e4b13a"/>
</svg>
<div class="t" style="left:45.00px;top:177.12px;font-size:9.5px;line-height:9.5px;color:#111111;transform:scaleX(0.885);transform-origin:0 0">gpio</div>
<div class="t" style="left:112.00px;top:177.12px;font-size:9.5px;line-height:9.5px;color:#111111;transform:scaleX(0.8);transform-origin:0 0">2.1.1</div>
<div style="position:absolute;left:17.5px;top:190.14px;width:10px;height:10px;box-sizing:border-box;border:1px solid #646464;background:#fff;border-radius:1px"></div>
<svg style="position:absolute;left:29.4px;top:189.14px" width="13" height="12" viewBox="0 0 13 12">
<path d="M2.2 0.5 L7.4 0.5 L10.2 3.3 L10.2 9.2 L2.2 9.2 Z" fill="#fffdf5" stroke="#d4ad5c" stroke-width="0.9"/>
<path d="M7.2 0.6 L7.2 3.5 L10.1 3.5" fill="none" stroke="#d4ad5c" stroke-width="0.8"/>
<path d="M0.8 5 L2.8 5 L6.3 2.8 L6.3 10.5 L2.8 8.3 L0.8 8.3 Z" fill="#6494d6"/>
<path d="M3.4 4.3 L5.1 3.5 L5.1 9.7 L3.4 8.9 Z" fill="#b3cff2"/>
<path d="M7.1 4.2 L12 6.3 L7.1 8.4 Z" fill="#e4b13a"/>
</svg>
<div class="t" style="left:45.00px;top:190.20px;font-size:9.5px;line-height:9.5px;color:#111111;transform:scaleX(0.885);transform-origin:0 0">i2c</div>
<div class="t" style="left:112.00px;top:190.20px;font-size:9.5px;line-height:9.5px;color:#111111;transform:scaleX(0.8);transform-origin:0 0">2.0.3</div>
</div>
<div style="position:absolute;left:388px;top:319px;width:12px;height:195px;background:#f0f0f0;"></div>
<div style="position:absolute;left:389px;top:332px;width:11px;height:76px;background:#cdcdcd;"></div>
<svg style="position:absolute;left:388px;top:322px" width="12" height="9" viewBox="0 0 12 9"><path d="M3 6 L6 3 L9 6" fill="none" stroke="#606060" stroke-width="1.4"/></svg>
<svg style="position:absolute;left:388px;top:503px" width="12" height="9" viewBox="0 0 12 9"><path d="M3 3 L6 6 L9 3" fill="none" stroke="#606060" stroke-width="1.4"/></svg>
<div style="position:absolute;left:409px;top:277px;width:195px;height:20px;box-sizing:border-box;border:1px solid #cfdbe9;border-bottom:none;border-radius:2px 2px 0 0;background:linear-gradient(180deg,#e3eaf3 0%,#f4f7fb 55%,#ffffff 100%);-webkit-mask-image:linear-gradient(180deg,#000 0%,#000 50%,rgba(0,0,0,0) 100%);"></div>
<div class="t" style="left:414.00px;top:279.86px;font-size:9.5px;line-height:9.5px;color:#1f7ddc;font-weight:700;transform:scaleX(0.8800);transform-origin:0 0;">utilities</div>
<svg style="position:absolute;left:553px;top:282px" width="11" height="10" viewBox="0 0 11 10"><path d="M4.2 0.8 L8.6 0.8 L5.2 8.6 L0.8 8.6 Z" fill="#f1e9dc" stroke="#bba57c" stroke-width="0.9"/><path d="M0.8 8.6 L2.6 4.6 L4.6 4.6 L2.9 8.6 Z" fill="#dcc6a6"/><path d="M5.6 9 L10.2 9" stroke="#bba57c" stroke-width="0.9"/></svg>
<svg style="position:absolute;left:569px;top:282px" width="10" height="10" viewBox="0 0 10 10"><rect x="0.5" y="0.5" width="8.3" height="8.6" fill="#f4f9fd" stroke="#a9b6cc" stroke-width="1"/><path d="M1.8 5.2 L3.8 7.4 L8 2.6" fill="none" stroke="#3b5b8c" stroke-width="1.3"/></svg>
<svg style="position:absolute;left:585px;top:281px" width="13" height="13" viewBox="0 0 13 13"><path d="M1.4 1.4 L7 7 M7 1.4 L1.4 7" stroke="#8c8c8c" stroke-width="2.9" stroke-linecap="round"/><path d="M1.4 1.4 L7 7 M7 1.4 L1.4 7" stroke="#dcdcdc" stroke-width="1.1" stroke-linecap="round"/><path d="M4.2 5 L9.8 10.6 M9.8 5 L4.2 10.6" stroke="#6c6c6c" stroke-width="3" stroke-linecap="round"/></svg>
<div style="position:absolute;left:413.3px;top:299px;width:185.7px;height:16px;box-sizing:border-box;border:1px solid #858585;background:#fff;"></div>
<div class="t" style="left:417.30px;top:301.96px;font-size:9.5px;line-height:9.5px;color:#555555;font-weight:400;transform:scaleX(0.9488);transform-origin:0 0;">type to filter</div>
<div style="position:absolute;left:413.3px;top:318px;width:185.7px;height:197px;box-sizing:border-box;border:1px solid #bdbdbd;background:#fff;overflow:hidden;"></div>
<div style="position:absolute;left:523.3px;top:320px;width:1px;height:16px;background:#eeeeee;"></div>
<div style="position:absolute;left:559.3px;top:320px;width:1px;height:16px;background:#eeeeee;"></div>
<div class="t" style="left:419.30px;top:323.46px;font-size:9.5px;line-height:9.5px;color:#111111;font-weight:400;transform:scaleX(0.9146);transform-origin:0 0;">Name</div>
<div class="t" style="left:528.30px;top:323.46px;font-size:9.5px;line-height:9.5px;color:#111111;font-weight:400;transform:scaleX(0.8604);transform-origin:0 0;">Version</div>
<div style="position:absolute;left:414.3px;top:319px;width:183.7px;height:195px;overflow:hidden">
<div style="position:absolute;left:17.5px;top:20.100000000000023px;width:10px;height:10px;box-sizing:border-box;border:1px solid #646464;background:#fff;border-radius:1px"></div>
<svg style="position:absolute;left:29.4px;top:19.10px" width="13" height="12" viewBox="0 0 13 12">
<path d="M2.2 0.5 L7.4 0.5 L10.2 3.3 L10.2 9.2 L2.2 9.2 Z" fill="#fffdf5" stroke="#d4ad5c" stroke-width="0.9"/>
<path d="M7.2 0.6 L7.2 3.5 L10.1 3.5" fill="none" stroke="#d4ad5c" stroke-width="0.8"/>
<path d="M0.8 5 L2.8 5 L6.3 2.8 L6.3 10.5 L2.8 8.3 L0.8 8.3 Z" fill="#6494d6"/>
<path d="M3.4 4.3 L5.1 3.5 L5.1 9.7 L3.4 8.9 Z" fill="#b3cff2"/>
<path d="M7.1 4.2 L12 6.3 L7.1 8.4 Z" fill="#e4b13a"/>
</svg>
<div class="t" style="left:45.00px;top:20.16px;font-size:9.5px;line-height:9.5px;color:#111111;transform:scaleX(0.885);transform-origin:0 0">debug_console</div>
<div class="t" style="left:112.00px;top:20.16px;font-size:9.5px;line-height:9.5px;color:#111111;transform:scaleX(0.8);transform-origin:0 0">1.0.0</div>
<div style="position:absolute;left:17.5px;top:33.18000000000001px;width:10px;height:10px;box-sizing:border-box;border:1px solid #646464;background:#fff;border-radius:1px"></div>
<svg style="position:absolute;left:29.4px;top:32.18px" width="13" height="12" viewBox="0 0 13 12">
<path d="M2.2 0.5 L7.4 0.5 L10.2 3.3 L10.2 9.2 L2.2 9.2 Z" fill="#fffdf5" stroke="#d4ad5c" stroke-width="0.9"/>
<path d="M7.2 0.6 L7.2 3.5 L10.1 3.5" fill="none" stroke="#d4ad5c" stroke-width="0.8"/>
<path d="M0.8 5 L2.8 5 L6.3 2.8 L6.3 10.5 L2.8 8.3 L0.8 8.3 Z" fill="#6494d6"/>
<path d="M3.4 4.3 L5.1 3.5 L5.1 9.7 L3.4 8.9 Z" fill="#b3cff2"/>
<path d="M7.1 4.2 L12 6.3 L7.1 8.4 Z" fill="#e4b13a"/>
</svg>
<div class="t" style="left:45.00px;top:33.24px;font-size:9.5px;line-height:9.5px;color:#111111;transform:scaleX(0.885);transform-origin:0 0">notifier</div>
<div class="t" style="left:112.00px;top:33.24px;font-size:9.5px;line-height:9.5px;color:#111111;transform:scaleX(0.8);transform-origin:0 0">1.0.0</div>
</div>
<div style="position:absolute;left:607px;top:277px;width:227px;height:20px;box-sizing:border-box;border:1px solid #cfdbe9;border-bottom:none;border-radius:2px 2px 0 0;background:linear-gradient(180deg,#e3eaf3 0%,#f4f7fb 55%,#ffffff 100%);-webkit-mask-image:linear-gradient(180deg,#000 0%,#000 50%,rgba(0,0,0,0) 100%);"></div>
<div class="t" style="left:612.00px;top:279.86px;font-size:9.5px;line-height:9.5px;color:#1f7ddc;font-weight:700;transform:scaleX(0.8800);transform-origin:0 0;">middleware</div>
<svg style="position:absolute;left:783px;top:282px" width="11" height="10" viewBox="0 0 11 10"><path d="M4.2 0.8 L8.6 0.8 L5.2 8.6 L0.8 8.6 Z" fill="#f1e9dc" stroke="#bba57c" stroke-width="0.9"/><path d="M0.8 8.6 L2.6 4.6 L4.6 4.6 L2.9 8.6 Z" fill="#dcc6a6"/><path d="M5.6 9 L10.2 9" stroke="#bba57c" stroke-width="0.9"/></svg>
<svg style="position:absolute;left:800px;top:282px" width="10" height="10" viewBox="0 0 10 10"><rect x="0.5" y="0.5" width="8.3" height="8.6" fill="#f4f9fd" stroke="#a9b6cc" stroke-width="1"/><path d="M1.8 5.2 L3.8 7.4 L8 2.6" fill="none" stroke="#3b5b8c" stroke-width="1.3"/></svg>
<svg style="position:absolute;left:816px;top:281px" width="13" height="13" viewBox="0 0 13 13"><path d="M1.4 1.4 L7 7 M7 1.4 L1.4 7" stroke="#8c8c8c" stroke-width="2.9" stroke-linecap="round"/><path d="M1.4 1.4 L7 7 M7 1.4 L1.4 7" stroke="#dcdcdc" stroke-width="1.1" stroke-linecap="round"/><path d="M4.2 5 L9.8 10.6 M9.8 5 L4.2 10.6" stroke="#6c6c6c" stroke-width="3" stroke-linecap="round"/></svg>
<div style="position:absolute;left:611.7px;top:299px;width:218.29999999999995px;height:16px;box-sizing:border-box;border:1px solid #858585;background:#fff;"></div>
<div class="t" style="left:615.70px;top:301.96px;font-size:9.5px;line-height:9.5px;color:#555555;font-weight:400;transform:scaleX(0.9488);transform-origin:0 0;">type to filter</div>
<div style="position:absolute;left:611.7px;top:318px;width:218.29999999999995px;height:197px;box-sizing:border-box;border:1px solid #bdbdbd;background:#fff;overflow:hidden;"></div>
<div style="position:absolute;left:721.7px;top:320px;width:1px;height:16px;background:#eeeeee;"></div>
<div style="position:absolute;left:757.7px;top:320px;width:1px;height:16px;background:#eeeeee;"></div>
<div class="t" style="left:617.70px;top:323.46px;font-size:9.5px;line-height:9.5px;color:#111111;font-weight:400;transform:scaleX(0.9146);transform-origin:0 0;">Name</div>
<div class="t" style="left:726.70px;top:323.46px;font-size:9.5px;line-height:9.5px;color:#111111;font-weight:400;transform:scaleX(0.8604);transform-origin:0 0;">Version</div>
<div style="position:absolute;left:612.7px;top:319px;width:216.29999999999995px;height:195px;overflow:hidden">
<div style="position:absolute;left:17.5px;top:20.100000000000023px;width:10px;height:10px;box-sizing:border-box;border:1px solid #646464;background:#fff;border-radius:1px"></div>
<svg style="position:absolute;left:29.4px;top:19.10px" width="13" height="12" viewBox="0 0 13 12">
<path d="M2.2 0.5 L7.4 0.5 L10.2 3.3 L10.2 9.2 L2.2 9.2 Z" fill="#fffdf5" stroke="#d4ad5c" stroke-width="0.9"/>
<path d="M7.2 0.6 L7.2 3.5 L10.1 3.5" fill="none" stroke="#d4ad5c" stroke-width="0.8"/>
<path d="M0.8 5 L2.8 5 L6.3 2.8 L6.3 10.5 L2.8 8.3 L0.8 8.3 Z" fill="#6494d6"/>
<path d="M3.4 4.3 L5.1 3.5 L5.1 9.7 L3.4 8.9 Z" fill="#b3cff2"/>
<path d="M7.1 4.2 L12 6.3 L7.1 8.4 Z" fill="#e4b13a"/>
</svg>
<div class="t" style="left:45.00px;top:20.16px;font-size:9.5px;line-height:9.5px;color:#111111;transform:scaleX(0.885);transform-origin:0 0">dma_manager</div>
<div class="t" style="left:112.00px;top:20.16px;font-size:9.5px;line-height:9.5px;color:#111111;transform:scaleX(0.8);transform-origin:0 0">2.0.0</div>
<div style="position:absolute;left:17.5px;top:33.18000000000001px;width:10px;height:10px;box-sizing:border-box;border:1px solid #646464;background:#fff;border-radius:1px"></div>
<svg style="position:absolute;left:29.4px;top:32.18px" width="13" height="12" viewBox="0 0 13 12">
<path d="M2.2 0.5 L7.4 0.5 L10.2 3.3 L10.2 9.2 L2.2 9.2 Z" fill="#fffdf5" stroke="#d4ad5c" stroke-width="0.9"/>
<path d="M7.2 0.6 L7.2 3.5 L10.1 3.5" fill="none" stroke="#d4ad5c" stroke-width="0.8"/>
<path d="M0.8 5 L2.8 5 L6.3 2.8 L6.3 10.5 L2.8 8.3 L0.8 8.3 Z" fill="#6494d6"/>
<path d="M3.4 4.3 L5.1 3.5 L5.1 9.7 L3.4 8.9 Z" fill="#b3cff2"/>
<path d="M7.1 4.2 L12 6.3 L7.1 8.4 Z" fill="#e4b13a"/>
</svg>
<div class="t" style="left:45.00px;top:33.24px;font-size:9.5px;line-height:9.5px;color:#111111;transform:scaleX(0.885);transform-origin:0 0">fatfs</div>
<div class="t" style="left:112.00px;top:33.24px;font-size:9.5px;line-height:9.5px;color:#111111;transform:scaleX(0.8);transform-origin:0 0">0.12</div>
<div style="position:absolute;left:17.5px;top:46.26000000000005px;width:10px;height:10px;box-sizing:border-box;border:1px solid #646464;background:#fff;border-radius:1px"></div>
<svg style="position:absolute;left:29.4px;top:45.26px" width="13" height="12" viewBox="0 0 13 12">
<path d="M2.2 0.5 L7.4 0.5 L10.2 3.3 L10.2 9.2 L2.2 9.2 Z" fill="#fffdf5" stroke="#d4ad5c" stroke-width="0.9"/>
<path d="M7.2 0.6 L7.2 3.5 L10.1 3.5" fill="none" stroke="#d4ad5c" stroke-width="0.8"/>
<path d="M0.8 5 L2.8 5 L6.3 2.8 L6.3 10.5 L2.8 8.3 L0.8 8.3 Z" fill="#6494d6"/>
<path d="M3.4 4.3 L5.1 3.5 L5.1 9.7 L3.4 8.9 Z" fill="#b3cff2"/>
<path d="M7.1 4.2 L12 6.3 L7.1 8.4 Z" fill="#e4b13a"/>
</svg>
<div class="t" style="left:45.00px;top:46.32px;font-size:9.5px;line-height:9.5px;color:#111111;transform:scaleX(0.885);transform-origin:0 0">generic_lists</div>
<div class="t" style="left:112.00px;top:46.32px;font-size:9.5px;line-height:9.5px;color:#111111;transform:scaleX(0.8);transform-origin:0 0">1.0.0</div>
<div style="position:absolute;left:17.5px;top:59.34000000000003px;width:10px;height:10px;box-sizing:border-box;border:1px solid #646464;background:#fff;border-radius:1px"></div>
<svg style="position:absolute;left:29.4px;top:58.34px" width="13" height="12" viewBox="0 0 13 12">
<path d="M2.2 0.5 L7.4 0.5 L10.2 3.3 L10.2 9.2 L2.2 9.2 Z" fill="#fffdf5" stroke="#d4ad5c" stroke-width="0.9"/>
<path d="M7.2 0.6 L7.2 3.5 L10.1 3.5" fill="none" stroke="#d4ad5c" stroke-width="0.8"/>
<path d="M0.8 5 L2.8 5 L6.3 2.8 L6.3 10.5 L2.8 8.3 L0.8 8.3 Z" fill="#6494d6"/>
<path d="M3.4 4.3 L5.1 3.5 L5.1 9.7 L3.4 8.9 Z" fill="#b3cff2"/>
<path d="M7.1 4.2 L12 6.3 L7.1 8.4 Z" fill="#e4b13a"/>
</svg>
<div class="t" style="left:45.00px;top:59.40px;font-size:9.5px;line-height:9.5px;color:#111111;transform:scaleX(0.885);transform-origin:0 0">mbedtls_include</div>
<div class="t" style="left:112.00px;top:59.40px;font-size:9.5px;line-height:9.5px;color:#111111;transform:scaleX(0.8);transform-origin:0 0">1.0.0</div>
<div style="position:absolute;left:17.5px;top:72.42000000000002px;width:10px;height:10px;box-sizing:border-box;border:1px solid #646464;background:#fff;border-radius:1px"></div>
<svg style="position:absolute;left:29.4px;top:71.42px" width="13" height="12" viewBox="0 0 13 12">
<path d="M2.2 0.5 L7.4 0.5 L10.2 3.3 L10.2 9.2 L2.2 9.2 Z" fill="#fffdf5" stroke="#d4ad5c" stroke-width="0.9"/>
<path d="M7.2 0.6 L7.2 3.5 L10.1 3.5" fill="none" stroke="#d4ad5c" stroke-width="0.8"/>
<path d="M0.8 5 L2.8 5 L6.3 2.8 L6.3 10.5 L2.8 8.3 L0.8 8.3 Z" fill="#6494d6"/>
<path d="M3.4 4.3 L5.1 3.5 L5.1 9.7 L3.4 8.9 Z" fill="#b3cff2"/>
<path d="M7.1 4.2 L12 6.3 L7.1 8.4 Z" fill="#e4b13a"/>
</svg>
<div class="t" style="left:45.00px;top:72.48px;font-size:9.5px;line-height:9.5px;color:#111111;transform:scaleX(0.885);transform-origin:0 0">mbedtls_port</div>
<div class="t" style="left:112.00px;top:72.48px;font-size:9.5px;line-height:9.5px;color:#111111;transform:scaleX(0.8);transform-origin:0 0">1.0.0</div>
<div style="position:absolute;left:17.5px;top:85.5px;width:10px;height:10px;box-sizing:border-box;border:1px solid #646464;background:#fff;border-radius:1px"></div>
<svg style="position:absolute;left:29.4px;top:84.50px" width="13" height="12" viewBox="0 0 13 12">
<path d="M2.2 0.5 L7.4 0.5 L10.2 3.3 L10.2 9.2 L2.2 9.2 Z" fill="#fffdf5" stroke="#d4ad5c" stroke-width="0.9"/>
<path d="M7.2 0.6 L7.2 3.5 L10.1 3.5" fill="none" stroke="#d4ad5c" stroke-width="0.8"/>
<path d="M0.8 5 L2.8 5 L6.3 2.8 L6.3 10.5 L2.8 8.3 L0.8 8.3 Z" fill="#6494d6"/>
<path d="M3.4 4.3 L5.1 3.5 L5.1 9.7 L3.4 8.9 Z" fill="#b3cff2"/>
<path d="M7.1 4.2 L12 6.3 L7.1 8.4 Z" fill="#e4b13a"/>
</svg>
<div class="t" style="left:45.00px;top:85.56px;font-size:9.5px;line-height:9.5px;color:#111111;transform:scaleX(0.885);transform-origin:0 0">mbedtls_source</div>
<div class="t" style="left:112.00px;top:85.56px;font-size:9.5px;line-height:9.5px;color:#111111;transform:scaleX(0.8);transform-origin:0 0">1.0.0</div>
<div style="position:absolute;left:17.5px;top:98.58000000000004px;width:10px;height:10px;box-sizing:border-box;border:1px solid #646464;background:#fff;border-radius:1px"></div>
<svg style="position:absolute;left:29.4px;top:97.58px" width="13" height="12" viewBox="0 0 13 12">
<path d="M2.2 0.5 L7.4 0.5 L10.2 3.3 L10.2 9.2 L2.2 9.2 Z" fill="#fffdf5" stroke="#d4ad5c" stroke-width="0.9"/>
<path d="M7.2 0.6 L7.2 3.5 L10.1 3.5" fill="none" stroke="#d4ad5c" stroke-width="0.8"/>
<path d="M0.8 5 L2.8 5 L6.3 2.8 L6.3 10.5 L2.8 8.3 L0.8 8.3 Z" fill="#6494d6"/>
<path d="M3.4 4.3 L5.1 3.5 L5.1 9.7 L3.4 8.9 Z" fill="#b3cff2"/>
<path d="M7.1 4.2 L12 6.3 L7.1 8.4 Z" fill="#e4b13a"/>
</svg>
<div class="t" style="left:45.00px;top:98.64px;font-size:9.5px;line-height:9.5px;color:#111111;transform:scaleX(0.885);transform-origin:0 0">common</div>
<div class="t" style="left:112.00px;top:98.64px;font-size:9.5px;line-height:9.5px;color:#111111;transform:scaleX(0.8);transform-origin:0 0">2.1.2</div>
<div style="position:absolute;left:17.5px;top:111.66000000000003px;width:10px;height:10px;box-sizing:border-box;border:1px solid #646464;background:#fff;border-radius:1px"></div>
<svg style="position:absolute;left:29.4px;top:110.66px" width="13" height="12" viewBox="0 0 13 12">
<path d="M2.2 0.5 L7.4 0.5 L10.2 3.3 L10.2 9.2 L2.2 9.2 Z" fill="#fffdf5" stroke="#d4ad5c" stroke-width="0.9"/>
<path d="M7.2 0.6 L7.2 3.5 L10.1 3.5" fill="none" stroke="#d4ad5c" stroke-width="0.8"/>
<path d="M0.8 5 L2.8 5 L6.3 2.8 L6.3 10.5 L2.8 8.3 L0.8 8.3 Z" fill="#6494d6"/>
<path d="M3.4 4.3 L5.1 3.5 L5.1 9.7 L3.4 8.9 Z" fill="#b3cff2"/>
<path d="M7.1 4.2 L12 6.3 L7.1 8.4 Z" fill="#e4b13a"/>
</svg>
<div class="t" style="left:45.00px;top:111.72px;font-size:9.5px;line-height:9.5px;color:#111111;transform:scaleX(0.885);transform-origin:0 0">mmc</div>
<div class="t" style="left:112.00px;top:111.72px;font-size:9.5px;line-height:9.5px;color:#111111;transform:scaleX(0.8);transform-origin:0 0">2.1.2</div>
<div style="position:absolute;left:17.5px;top:124.74000000000001px;width:10px;height:10px;box-sizing:border-box;border:1px solid #646464;background:#fff;border-radius:1px"></div>
<svg style="position:absolute;left:29.4px;top:123.74px" width="13" height="12" viewBox="0 0 13 12">
<path d="M2.2 0.5 L7.4 0.5 L10.2 3.3 L10.2 9.2 L2.2 9.2 Z" fill="#fffdf5" stroke="#d4ad5c" stroke-width="0.9"/>
<path d="M7.2 0.6 L7.2 3.5 L10.1 3.5" fill="none" stroke="#d4ad5c" stroke-width="0.8"/>
<path d="M0.8 5 L2.8 5 L6.3 2.8 L6.3 10.5 L2.8 8.3 L0.8 8.3 Z" fill="#6494d6"/>
<path d="M3.4 4.3 L5.1 3.5 L5.1 9.7 L3.4 8.9 Z" fill="#b3cff2"/>
<path d="M7.1 4.2 L12 6.3 L7.1 8.4 Z" fill="#e4b13a"/>
</svg>
<div class="t" style="left:45.00px;top:124.80px;font-size:9.5px;line-height:9.5px;color:#111111;transform:scaleX(0.885);transform-origin:0 0">sd</div>
<div class="t" style="left:112.00px;top:124.80px;font-size:9.5px;line-height:9.5px;color:#111111;transform:scaleX(0.8);transform-origin:0 0">2.1.2</div>
<div style="position:absolute;left:17.5px;top:137.82000000000005px;width:10px;height:10px;box-sizing:border-box;border:1px solid #646464;background:#fff;border-radius:1px"></div>
<svg style="position:absolute;left:29.4px;top:136.82px" width="13" height="12" viewBox="0 0 13 12">
<path d="M2.2 0.5 L7.4 0.5 L10.2 3.3 L10.2 9.2 L2.2 9.2 Z" fill="#fffdf5" stroke="#d4ad5c" stroke-width="0.9"/>
<path d="M7.2 0.6 L7.2 3.5 L10.1 3.5" fill="none" stroke="#d4ad5c" stroke-width="0.8"/>
<path d="M0.8 5 L2.8 5 L6.3 2.8 L6.3 10.5 L2.8 8.3 L0.8 8.3 Z" fill="#6494d6"/>
<path d="M3.4 4.3 L5.1 3.5 L5.1 9.7 L3.4 8.9 Z" fill="#b3cff2"/>
<path d="M7.1 4.2 L12 6.3 L7.1 8.4 Z" fill="#e4b13a"/>
</svg>
<div class="t" style="left:45.00px;top:137.88px;font-size:9.5px;line-height:9.5px;color:#111111;transform:scaleX(0.885);transform-origin:0 0">sdio</div>
<div class="t" style="left:112.00px;top:137.88px;font-size:9.5px;line-height:9.5px;color:#111111;transform:scaleX(0.8);transform-origin:0 0">2.1.2</div>
<div style="position:absolute;left:17.5px;top:150.90000000000003px;width:10px;height:10px;box-sizing:border-box;border:1px solid #646464;background:#fff;border-radius:1px"></div>
<svg style="position:absolute;left:29.4px;top:149.90px" width="13" height="12" viewBox="0 0 13 12">
<path d="M2.2 0.5 L7.4 0.5 L10.2 3.3 L10.2 9.2 L2.2 9.2 Z" fill="#fffdf5" stroke="#d4ad5c" stroke-width="0.9"/>
<path d="M7.2 0.6 L7.2 3.5 L10.1 3.5" fill="none" stroke="#d4ad5c" stroke-width="0.8"/>
<path d="M0.8 5 L2.8 5 L6.3 2.8 L6.3 10.5 L2.8 8.3 L0.8 8.3 Z" fill="#6494d6"/>
<path d="M3.4 4.3 L5.1 3.5 L5.1 9.7 L3.4 8.9 Z" fill="#b3cff2"/>
<path d="M7.1 4.2 L12 6.3 L7.1 8.4 Z" fill="#e4b13a"/>
</svg>
<div class="t" style="left:45.00px;top:150.96px;font-size:9.5px;line-height:9.5px;color:#111111;transform:scaleX(0.885);transform-origin:0 0">sdspi</div>
<div class="t" style="left:112.00px;top:150.96px;font-size:9.5px;line-height:9.5px;color:#111111;transform:scaleX(0.8);transform-origin:0 0">2.1.2</div>
<div style="position:absolute;left:17.5px;top:163.98000000000002px;width:10px;height:10px;box-sizing:border-box;border:1px solid #646464;background:#fff;border-radius:1px"></div>
<svg style="position:absolute;left:29.4px;top:162.98px" width="13" height="12" viewBox="0 0 13 12">
<path d="M2.2 0.5 L7.4 0.5 L10.2 3.3 L10.2 9.2 L2.2 9.2 Z" fill="#fffdf5" stroke="#d4ad5c" stroke-width="0.9"/>
<path d="M7.2 0.6 L7.2 3.5 L10.1 3.5" fill="none" stroke="#d4ad5c" stroke-width="0.8"/>
<path d="M0.8 5 L2.8 5 L6.3 2.8 L6.3 10.5 L2.8 8.3 L0.8 8.3 Z" fill="#6494d6"/>
<path d="M3.4 4.3 L5.1 3.5 L5.1 9.7 L3.4 8.9 Z" fill="#b3cff2"/>
<path d="M7.1 4.2 L12 6.3 L7.1 8.4 Z" fill="#e4b13a"/>
</svg>
<div class="t" style="left:45.00px;top:164.04px;font-size:9.5px;line-height:9.5px;color:#111111;transform:scaleX(0.885);transform-origin:0 0">ble_appl_main</div>
<div class="t" style="left:112.00px;top:164.04px;font-size:9.5px;line-height:9.5px;color:#111111;transform:scaleX(0.8);transform-origin:0 0">1.0.0</div>
<div style="position:absolute;left:17.5px;top:177.06000000000006px;width:10px;height:10px;box-sizing:border-box;border:1px solid #646464;background:#fff;border-radius:1px"></div>
<svg style="position:absolute;left:29.4px;top:176.06px" width="13" height="12" viewBox="0 0 13 12">
<path d="M2.2 0.5 L7.4 0.5 L10.2 3.3 L10.2 9.2 L2.2 9.2 Z" fill="#fffdf5" stroke="#d4ad5c" stroke-width="0.9"/>
<path d="M7.2 0.6 L7.2 3.5 L10.1 3.5" fill="none" stroke="#d4ad5c" stroke-width="0.8"/>
<path d="M0.8 5 L2.8 5 L6.3 2.8 L6.3 10.5 L2.8 8.3 L0.8 8.3 Z" fill="#6494d6"/>
<path d="M3.4 4.3 L5.1 3.5 L5.1 9.7 L3.4 8.9 Z" fill="#b3cff2"/>
<path d="M7.1 4.2 L12 6.3 L7.1 8.4 Z" fill="#e4b13a"/>
</svg>
<div class="t" style="left:45.00px;top:177.12px;font-size:9.5px;line-height:9.5px;color:#111111;transform:scaleX(0.885);transform-origin:0 0">ble_controller</div>
<div class="t" style="left:112.00px;top:177.12px;font-size:9.5px;line-height:9.5px;color:#111111;transform:scaleX(0.8);transform-origin:0 0">1.0.0</div>
<div style="position:absolute;left:17.5px;top:190.14px;width:10px;height:10px;box-sizing:border-box;border:1px solid #646464;background:#fff;border-radius:1px"></div>
<svg style="position:absolute;left:29.4px;top:189.14px" width="13" height="12" viewBox="0 0 13 12">
<path d="M2.2 0.5 L7.4 0.5 L10.2 3.3 L10.2 9.2 L2.2 9.2 Z" fill="#fffdf5" stroke="#d4ad5c" stroke-width="0.9"/>
<path d="M7.2 0.6 L7.2 3.5 L10.1 3.5" fill="none" stroke="#d4ad5c" stroke-width="0.8"/>
<path d="M0.8 5 L2.8 5 L6.3 2.8 L6.3 10.5 L2.8 8.3 L0.8 8.3 Z" fill="#6494d6"/>
<path d="M3.4 4.3 L5.1 3.5 L5.1 9.7 L3.4 8.9 Z" fill="#b3cff2"/>
<path d="M7.1 4.2 L12 6.3 L7.1 8.4 Z" fill="#e4b13a"/>
</svg>
<div class="t" style="left:45.00px;top:190.20px;font-size:9.5px;line-height:9.5px;color:#111111;transform:scaleX(0.885);transform-origin:0 0">libraries</div>
<div class="t" style="left:112.00px;top:190.20px;font-size:9.5px;line-height:9.5px;color:#111111;transform:scaleX(0.8);transform-origin:0 0">1.0.0</div>
</div>
<div style="position:absolute;left:817px;top:319px;width:12px;height:195px;background:#f0f0f0;"></div>
<div style="position:absolute;left:818px;top:332px;width:11px;height:19px;background:#cdcdcd;"></div>
<svg style="position:absolute;left:817px;top:322px" width="12" height="9" viewBox="0 0 12 9"><path d="M3 6 L6 3 L9 6" fill="none" stroke="#606060" stroke-width="1.4"/></svg>
<svg style="position:absolute;left:817px;top:503px" width="12" height="9" viewBox="0 0 12 9"><path d="M3 3 L6 6 L9 3" fill="none" stroke="#606060" stroke-width="1.4"/></svg>
<div style="position:absolute;left:1px;top:609px;width:846px;height:1px;background:#d2d2d2;"></div>
<div style="position:absolute;left:1px;top:610px;width:846px;height:1px;background:#e4e4e4;"></div>
<svg style="position:absolute;left:11px;top:620px" width="17" height="17" viewBox="0 0 17 17"><circle cx="8.5" cy="8.5" r="7.2" fill="#f0f0f0" stroke="#6f7f9f" stroke-width="1"/><path d="M6 6.4 C6 4.6 7.2 3.9 8.5 3.9 C10 3.9 11.1 4.8 11.1 6.2 C11.1 7.9 8.9 8.2 8.6 10 L8.6 10.8" fill="none" stroke="#4b5a7c" stroke-width="1.9"/><circle cx="8.6" cy="12.9" r="1" fill="#4b5a7c"/></svg>
<div style="position:absolute;left:564px;top:621px;width:65px;height:17px;box-sizing:border-box;border:1px solid #adadad;background:#e1e1e1;"></div>
<div class="t" style="left:583.80px;top:624.76px;font-size:9.5px;line-height:9.5px;color:#111111;font-weight:400;transform:scaleX(0.8557);transform-origin:0 0;">&lt; Back</div>
<div style="position:absolute;left:630px;top:621px;width:66px;height:17px;box-sizing:border-box;border:1px solid #adadad;background:#e1e1e1;"></div>
<div class="t" style="left:650.60px;top:624.76px;font-size:9.5px;line-height:9.5px;color:#111111;font-weight:400;transform:scaleX(0.8616);transform-origin:0 0;">Next &gt;</div>
<div style="position:absolute;left:702px;top:621px;width:65px;height:17px;box-sizing:border-box;border:2px solid #0078d7;background:#e1e1e1;"></div>
<div class="t" style="left:723.30px;top:624.76px;font-size:9.5px;line-height:9.5px;color:#111111;font-weight:400;transform:scaleX(0.8595);transform-origin:0 0;">Finish</div>
<div style="position:absolute;left:773px;top:621px;width:66px;height:17px;box-sizing:border-box;border:1px solid #adadad;background:#e1e1e1;"></div>
<div class="t" style="left:793.00px;top:624.76px;font-size:9.5px;line-height:9.5px;color:#111111;font-weight:400;transform:scaleX(0.8800);transform-origin:0 0;">Cancel</div>
</body></html>
